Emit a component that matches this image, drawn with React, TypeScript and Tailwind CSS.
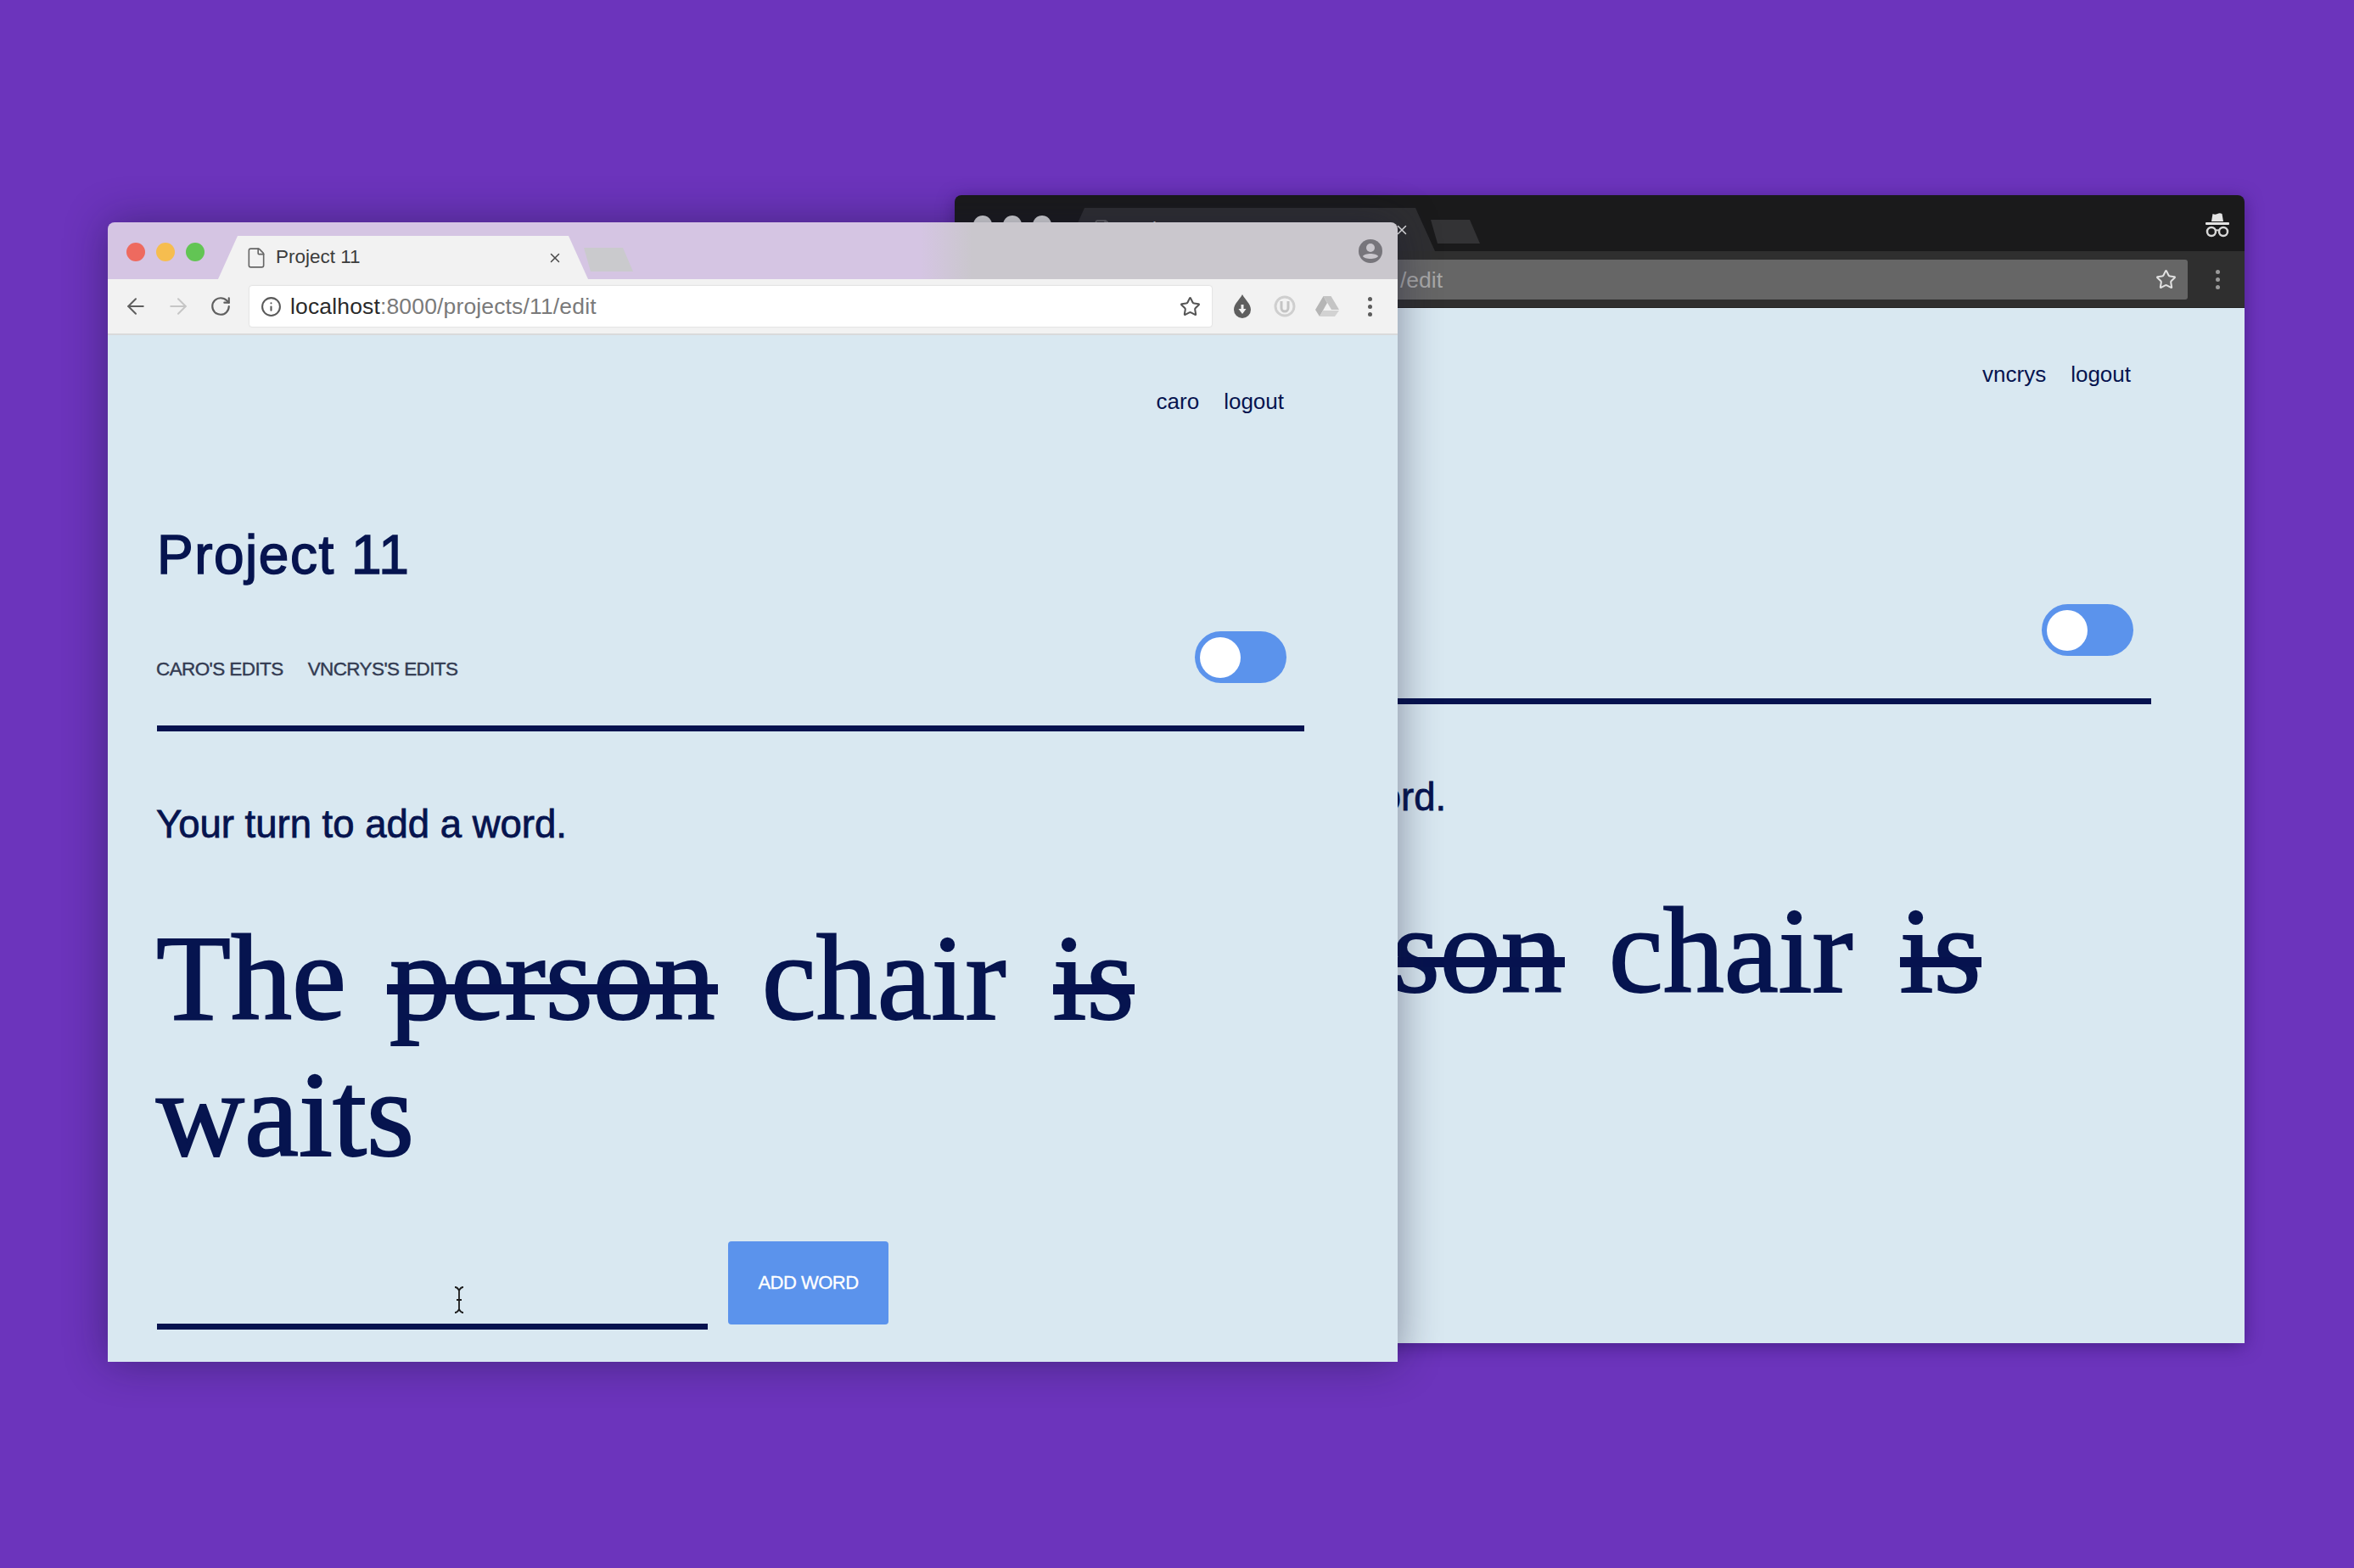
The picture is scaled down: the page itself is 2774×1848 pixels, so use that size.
import type { FC, ReactNode } from "react"
import { ArrowLeft, ArrowRight, File, Info, RotateCw, Star, X } from "lucide-react"

const DropIcon: FC = () => (
  <svg width="22" height="30" viewBox="0 0 22 30">
    <path d="M11 1C14 7 21 12 21 19a10 10 0 0 1-20 0C1 12 8 7 11 1Z" fill="#5f5f5f" />
    <path d="M9.500 13h3v5h3L11 24l-4.500-6h3Z" fill="#f2f2f2" />
  </svg>
)

const ShieldIcon: FC = () => (
  <svg width="26" height="26" viewBox="0 0 26 26">
    <circle cx="13" cy="13" r="11" fill="#f2f2f2" stroke="#cfcfcf" strokeWidth="3" />
    <path d="M9 7v8a4 4 0 0 0 8 0V7" fill="none" stroke="#c4c4c4" strokeWidth="3" />
  </svg>
)

const DriveIcon: FC = () => (
  <svg width="28" height="26" viewBox="0 0 28 26">
    <path d="M9.500 1h9L28 17h-9Z" fill="#c4c4c4" />
    <path d="M9.500 1 14 9 5 25 0 17Z" fill="#b5b5b5" />
    <path d="M9 18h19l-5 7H5Z" fill="#d2d2d2" />
  </svg>
)

const AvatarIcon: FC = () => (
  <svg width="28" height="28" viewBox="0 0 28 28">
    <circle cx="14" cy="14" r="14" fill="#77757b" />
    <circle cx="14" cy="10" r="5" fill="#c9c6cc" />
    <path d="M5 20c2-4 16-4 18 0-2 4-16 4-18 0Z" fill="#c9c6cc" />
  </svg>
)

const IncognitoIcon: FC = () => (
  <svg width="30" height="30" viewBox="0 0 30 30">
    <path d="M8 11 9.500 2c2 1 3.500 1 5.500 0s3.500-1 5.500 0L22 11Z" fill="#e4e4e4" />
    <rect x="1" y="12" width="28" height="3" rx="1" fill="#e4e4e4" />
    <circle cx="8" cy="23" r="5" fill="none" stroke="#d8d8d8" strokeWidth="2.500" />
    <circle cx="22" cy="23" r="5" fill="none" stroke="#d8d8d8" strokeWidth="2.500" />
    <path d="M13 22c1-1 3-1 4 0" fill="none" stroke="#d8d8d8" strokeWidth="2" />
  </svg>
)

const MenuDots: FC<{ dark?: boolean }> = ({ dark }) => (
  <div className="flex flex-col gap-[4px]">
    <span className={dark ? "w-[5px] h-[5px] rounded-full bg-[#9a9a9a]" : "w-[5px] h-[5px] rounded-full bg-[#5c5c5c]"} />
    <span className={dark ? "w-[5px] h-[5px] rounded-full bg-[#9a9a9a]" : "w-[5px] h-[5px] rounded-full bg-[#5c5c5c]"} />
    <span className={dark ? "w-[5px] h-[5px] rounded-full bg-[#9a9a9a]" : "w-[5px] h-[5px] rounded-full bg-[#5c5c5c]"} />
  </div>
)

type ChromeProps = {
  dark?: boolean
  className: string
  children: ReactNode
}

// ブラウザの枠
const BrowserWindow: FC<ChromeProps> = ({ dark, className, children }) => {
  return (
    <div className={className}>
      {/* タブ */}
      <div
        className={
          dark
            ? "flex items-end h-[66px] rounded-t-[8px] bg-[#1a1a1b]"
            : "flex items-end h-[67px] rounded-t-[8px] bg-[linear-gradient(90deg,#d5c5e3_0,#d5c5e3_63%,#cac7cd_67%)]"
        }
      >
        <div className="flex self-start gap-[13px] pl-[22px] mt-[24px]">
          <span className={dark ? "w-[22px] h-[22px] rounded-full bg-[#dcdcdc]" : "w-[22px] h-[22px] rounded-full bg-[#ee6a5f]"} />
          <span className={dark ? "w-[22px] h-[22px] rounded-full bg-[#dcdcdc]" : "w-[22px] h-[22px] rounded-full bg-[#f6bd4f]"} />
          <span className={dark ? "w-[22px] h-[22px] rounded-full bg-[#dcdcdc]" : "w-[22px] h-[22px] rounded-full bg-[#62c554]"} />
        </div>
        <div
          className={
            dark
              ? "flex items-center w-[436px] h-[51px] ml-[16px] pl-[33px] pr-[30px] text-[#c8c8c8] bg-[#2f2f31] [clip-path:polygon(23px_0,calc(100%-23px)_0,100%_100%,0_100%)]"
              : "flex items-center w-[436px] h-[51px] ml-[16px] pl-[33px] pr-[30px] text-[#3c3c3c] bg-[#f2f2f2] [clip-path:polygon(23px_0,calc(100%-23px)_0,100%_100%,0_100%)]"
          }
        >
          <File size={26} strokeWidth={1.5} className="shrink-0 -ml-[1px] text-[#666]" />
          <span className="ml-[10px] text-[22.500px] leading-none">Project 11</span>
          <X size={18} strokeWidth={2} className={dark ? "ml-auto text-[#e8e8e8]" : "ml-auto text-[#4a4a4a]"} />
        </div>
        <div
          className={
            dark
              ? "w-[58px] h-[28px] -ml-[5px] mb-[9px] bg-[#333335] [clip-path:polygon(0_0,46px_0,100%_100%,8px_100%)]"
              : "w-[58px] h-[28px] -ml-[5px] mb-[9px] bg-[#cacacd] [clip-path:polygon(0_0,46px_0,100%_100%,8px_100%)]"
          }
        />
        <div className="flex justify-center self-start w-[30px] ml-auto mr-[17px] mt-[20px]">
          {dark ? <IncognitoIcon /> : <AvatarIcon />}
        </div>
      </div>

      {/* アドレスバー */}
      <div
        className={
          dark
            ? "flex items-center h-[67px] pl-[8px] pr-[7px] bg-[#2f2f2f] border-b border-[#222]"
            : "flex items-center h-[66px] pl-[8px] pr-[8px] bg-[#f2f2f2] border-b-2 border-[#d9dadb]"
        }
      >
        <div className="flex items-center justify-center w-[50px] text-[#5f5f5f]">
          <ArrowLeft size={30} strokeWidth={1.6} />
        </div>
        <div className="flex items-center justify-center w-[50px] text-[#c6c6c6]">
          <ArrowRight size={30} strokeWidth={1.6} />
        </div>
        <div className="flex items-center justify-center w-[50px] text-[#5f5f5f]">
          <RotateCw size={26} strokeWidth={2} />
        </div>
        <div
          className={
            dark
              ? "flex flex-1 items-center justify-end h-[47px] ml-[11px] pr-[13px] pl-[11px] rounded-[3px] bg-[#666]"
              : "flex flex-1 items-center h-[48px] ml-[9px] pr-[13px] pl-[13px] rounded-[3px] bg-white shadow-[0_0_2px_rgba(0,0,0,0.2)]"
          }
        >
          {dark ? null : (
            <>
              <Info size={25} strokeWidth={2} className="text-[#5a5a5a]" />
              <span className="ml-[10px] text-[26.500px] leading-none tracking-[0.15px] text-[#7a7a7a]">
                <span className="text-[#2a2a2a]">localhost</span>:8000/projects/11/edit
              </span>
            </>
          )}
          <Star
            size={25}
            strokeWidth={2}
            className={dark ? "text-[#e0e0e0]" : "ml-auto text-[#555]"}
          />
        </div>
        {dark ? (
          <div className="flex items-center justify-center w-[50px] ml-[10px]">
            <MenuDots dark />
          </div>
        ) : (
          <div className="flex items-center pl-[11px]">
            <div className="flex items-center justify-center w-[50px]">
              <DropIcon />
            </div>
            <div className="flex items-center justify-center w-[50px]">
              <ShieldIcon />
            </div>
            <div className="flex items-center justify-center w-[50px]">
              <DriveIcon />
            </div>
            <div className="flex items-center justify-center w-[50px]">
              <MenuDots />
            </div>
          </div>
        )}
      </div>

      {children}
    </div>
  )
}

type PageProps = {
  user: string
  prompt: string
  waiting?: boolean
}

// ページ本体
const EditPage: FC<PageProps> = ({ user, prompt, waiting }) => {
  return (
    <div className="relative flex-1 pl-[58px] pr-[110px] pt-[63px] bg-[#d9e8f1] text-[#06144f] font-['Liberation_Sans',sans-serif]">
      <div className="flex justify-end gap-[29px] pr-[24px] text-[26px] leading-[30px]">
        <span>{user}</span>
        <span>logout</span>
      </div>

      <h1 className="mt-[126px] text-[64px] leading-[80px] tracking-[1.5px] [-webkit-text-stroke:1.500px_#06144f]">Project 11</h1>

      <div className="flex items-start justify-between mt-[50px] pr-[21px]">
        <div className="flex gap-[29px] mt-[30px] -ml-[1px] text-[22.500px] leading-[30px] tracking-[-0.6px] text-[#333b52] [-webkit-text-stroke:0.400px_#333b52]">
          <span>CARO'S EDITS</span>
          <span>VNCRYS'S EDITS</span>
        </div>
        <div className="flex items-center w-[108px] h-[61px] pl-[6px] rounded-full bg-[#5b93ec]">
          <span className="w-[48px] h-[48px] rounded-full bg-white" />
        </div>
      </div>

      <div className="h-[7px] mt-[50px] bg-[#06124f]" />

      <p className="mt-[85px] -ml-[1px] text-[45.500px] leading-[50px] [-webkit-text-stroke:0.800px_#06144f]">{prompt}</p>

      <div className="flex flex-wrap gap-x-[55px] mt-[75px] -ml-[1px] text-[144px] leading-[161px] font-['Liberation_Serif',serif] [-webkit-text-stroke:2px_#06144f]">
        <span className="-mr-[4px]">The</span>
        <span className="relative">
          person
          <span className="absolute -left-[3px] -right-[3px] top-[88px] h-[12px] bg-[#06124f]" />
        </span>
        <span>chair</span>
        <span className="relative">
          is
          <span className="absolute left-0 right-0 top-[88px] h-[12px] bg-[#06124f]" />
        </span>
        {waiting ? <span>waits</span> : null}
      </div>

      {waiting ? (
        <div className="flex items-end mt-[69px]">
          <input className="w-[649px] h-[60px] border-b-[7px] border-[#06124f] bg-transparent outline-none" />
          <button className="w-[189px] h-[98px] ml-[24px] mb-[6px] pb-[2px] rounded-[4px] bg-[#5b93ec] text-[22px] tracking-[-0.5px] text-white [-webkit-text-stroke:0.300px_#ffffff]">
            ADD WORD
          </button>
          {/* マウスカーソル */}
          <svg className="absolute left-[406px] top-[1121px]" width="16" height="32" viewBox="0 0 16 32">
            <path d="M3 1c3 0 4 2 5 4 1-2 2-4 5-4M8 5v22M3 31c3 0 4-2 5-4 1 2 2 4 5 4M5 16h6" fill="none" stroke="#1c1c1c" strokeWidth="1.800" />
          </svg>
        </div>
      ) : null}
    </div>
  )
}

export default function App() {
  return (
    <div className="relative w-[2774px] h-[1848px] overflow-hidden bg-[#6c34bc] font-['Liberation_Sans',sans-serif]">
      {/* 奥のシークレットウィンドウ */}
      <BrowserWindow
        dark
        className="absolute left-[1125px] top-[230px] flex flex-col w-[1520px] h-[1353px] rounded-[8px] shadow-[0_4px_20px_rgba(40,10,90,0.5)]"
      >
        <EditPage user="vncrys" prompt="Caro's turn to add a word." />
      </BrowserWindow>
      <span className="absolute left-[1650px] top-[315px] text-[26.500px] leading-[30px] text-[#a8a8a8]">/edit</span>

      {/* 手前のウィンドウ */}
      <BrowserWindow
        className="absolute left-[127px] top-[262px] flex flex-col w-[1520px] h-[1343px] rounded-[8px] shadow-[0_0_50px_rgba(20,20,50,0.45)]"
      >
        <EditPage user="caro" prompt="Your turn to add a word." waiting />
      </BrowserWindow>
    </div>
  )
}
